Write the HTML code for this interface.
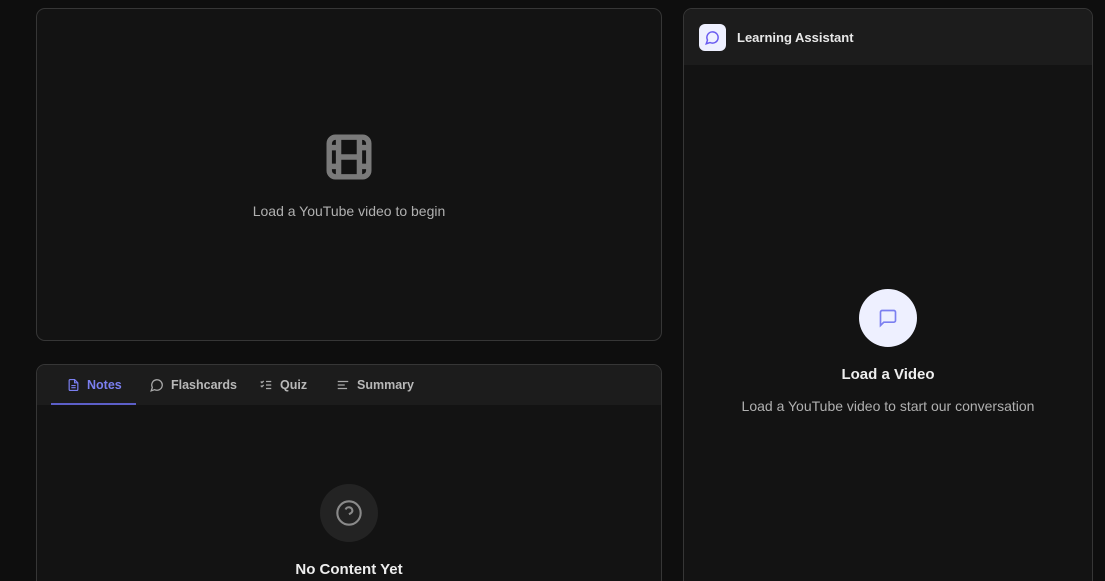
<!DOCTYPE html><html style="height:581px;overflow:hidden"><head><style>
body{margin:0;width:1105px;height:581px;background:#0e0e0e;font-family:"Liberation Sans",sans-serif;overflow:hidden;position:relative}
.card{position:absolute;background:#131313;border:1px solid #363636;border-radius:9px;box-sizing:border-box;overflow:hidden}
.t{position:absolute;left:0;right:0;text-align:center}
.tab{position:absolute;top:0;height:40px;display:flex;align-items:center;font-size:12.5px;color:#b8b8b8;font-weight:bold}
.tab svg{margin-right:7px}
</style></head><body>
<div class="card" style="left:36px;top:8px;width:626px;height:333px">
<svg style="position:absolute;left:287px;top:123px" width="50" height="50" viewBox="0 0 24 24" fill="none" stroke="#7a7a7a" stroke-width="2.6"><rect x="2.5" y="2.5" width="19" height="19" rx="3"/><path d="M7 3v18M17 3v18M7 12h10M3 7.5h4M3 16.5h4M17 7.5h4M17 16.5h4"/></svg>
<div class="t" style="top:194px;font-size:14px;color:#b0b0b0">Load a YouTube video to begin</div>
</div>
<div class="card" style="left:36px;top:364px;width:626px;height:240px">
<div style="position:absolute;left:0;right:0;top:0;height:40px;background:#1c1c1c"></div>
<div class="tab" style="left:30px;color:#7b7ff0"><svg width="13" height="14" viewBox="0 0 24 24" fill="none" stroke="#7b7ff0" stroke-width="2.2"><path d="M14 2H6a2 2 0 0 0-2 2v16a2 2 0 0 0 2 2h12a2 2 0 0 0 2-2V8z"/><path d="M14 2v6h6M8 13h8M8 17h8"/></svg>Notes</div>
<div style="position:absolute;left:14px;top:38px;width:85px;height:2px;background:#5c5fc8"></div>
<div class="tab" style="left:113px"><svg width="14" height="14" viewBox="0 0 24 24" fill="none" stroke="#aaa" stroke-width="2.2"><path d="M7.9 20A9 9 0 1 0 4 16.1L2 22z"/></svg>Flashcards</div>
<div class="tab" style="left:222px"><svg width="14" height="14" viewBox="0 0 24 24" fill="none" stroke="#aaa" stroke-width="2.2"><path d="M3 6l2 2 3-3M3 13l2 2 3-3M12 6h9M12 12h9M12 18h9"/></svg>Quiz</div>
<div class="tab" style="left:299px"><svg width="14" height="14" viewBox="0 0 24 24" fill="none" stroke="#aaa" stroke-width="2.2"><path d="M3 6h18M3 12h12M3 18h16"/></svg>Summary</div>
<div style="position:absolute;left:283px;top:119px;width:58px;height:58px;border-radius:50%;background:#232323"></div>
<svg style="position:absolute;left:298px;top:134px" width="28" height="28" viewBox="0 0 24 24" fill="none" stroke="#8a8a8a" stroke-width="1.8"><circle cx="12" cy="12" r="10"/><path d="M9.1 9a3 3 0 0 1 5.8 1c0 2-3 3-3 3M12 17h.01"/></svg>
<div class="t" style="top:196px;font-size:15px;font-weight:bold;color:#eee">No Content Yet</div>
</div>
<div class="card" style="left:683px;top:8px;width:410px;height:600px">
<div style="position:absolute;left:0;right:0;top:0;height:56px;background:#1c1c1c"></div>
<div style="position:absolute;left:15px;top:15px;width:27px;height:27px;border-radius:6px;background:#eef0ff"></div>
<svg style="position:absolute;left:21px;top:21px" width="15" height="15" viewBox="0 0 24 24" fill="none" stroke="#6a5cf0" stroke-width="2.4"><path d="M7.9 20A9 9 0 1 0 4 16.1L2 22z"/></svg>
<div style="position:absolute;left:53px;top:21px;font-size:13px;font-weight:bold;color:#e8e8e8">Learning Assistant</div>
<div style="position:absolute;left:175px;top:280px;width:58px;height:58px;border-radius:50%;background:#eef0ff"></div>
<svg style="position:absolute;left:194px;top:299px" width="20" height="20" viewBox="0 0 24 24" fill="none" stroke="#7b7ff0" stroke-width="2"><path d="M21 15a2 2 0 0 1-2 2H7l-4 4V5a2 2 0 0 1 2-2h14a2 2 0 0 1 2 2z"/></svg>
<div class="t" style="top:357px;font-size:15px;font-weight:bold;color:#eee">Load a Video</div>
<div class="t" style="top:389px;font-size:14px;color:#b0b0b0">Load a YouTube video to start our conversation</div>
</div>
</body></html>
